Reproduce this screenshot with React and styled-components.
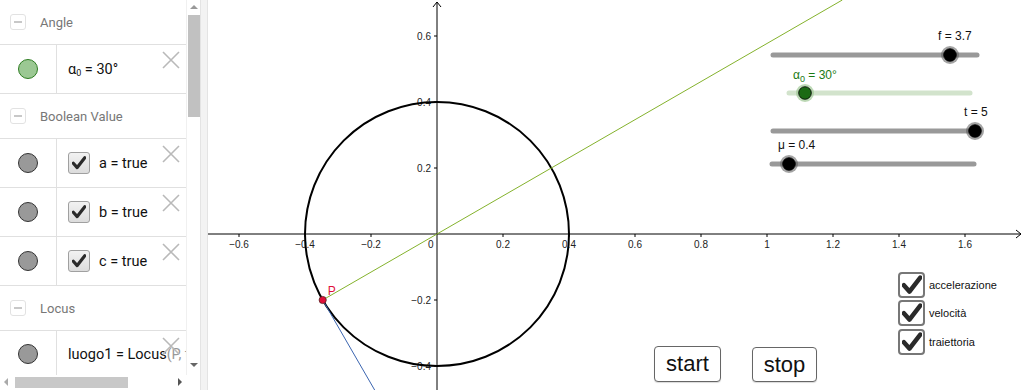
import React from "react";
import styled, { createGlobalStyle } from "styled-components";

const Global = createGlobalStyle`
  html, body { margin: 0; padding: 0; background: #fff; }
  body { width: 1024px; height: 390px; overflow: hidden; font-family: "Liberation Sans", Arial, sans-serif; }
  #root { width: 1024px; height: 390px; }
`;

const Page = styled.div`
  display: flex;
  width: 1024px;
  height: 390px;
  background: #fff;
`;

const Algebra = styled.div`
  width: 200px;
  height: 390px;
  display: grid;
  grid-template-columns: 186px 14px;
  grid-template-rows: 375px 14px 1px;
  background: #fff;
`;

const List = styled.div`
  overflow: hidden;
  display: flex;
  flex-direction: column;
`;

const Header = styled.div`
  height: 44px;
  flex: 0 0 auto;
  display: flex;
  align-items: center;
  gap: 14px;
  padding-left: 10px;
  border-bottom: 1px solid #e0e0e0;
  font-family: Roboto, "Noto Sans", sans-serif;
  font-size: 13px;
  color: #777;
`;

const Minus = styled.span`
  width: 14px;
  height: 14px;
  border: 1px solid #e2e2e2;
  border-radius: 3px;
  display: flex;
  align-items: center;
  justify-content: center;
  &::after {
    content: "";
    width: 8px;
    height: 1.5px;
    background: #c8c8c8;
  }
`;

const Item = styled.div`
  height: ${(p) => p.h || 48}px;
  flex: 0 0 auto;
  display: flex;
  position: relative;
  border-bottom: 1px solid #e0e0e0;
`;

const Marker = styled.div`
  width: 56px;
  flex: 0 0 56px;
  border-right: 1px solid #e0e0e0;
  display: flex;
  align-items: center;
  justify-content: center;
  &::after {
    content: "";
    width: 18px;
    height: 18px;
    border-radius: 50%;
    background: ${(p) => (p.green ? "#9bc893" : "#999")};
    border: 1px solid ${(p) => (p.green ? "#2e7d22" : "#333")};
  }
`;

const Formula = styled.div`
  flex: 1;
  display: flex;
  align-items: center;
  gap: 9px;
  padding-left: 11px;
  white-space: nowrap;
  overflow: hidden;
  font-family: Roboto, "Noto Sans", sans-serif;
  font-size: 14.5px;
  color: #111;
  sub { font-size: 9px; vertical-align: -2px; }
`;

const Fade = styled.span`
  color: #999;
`;

const Close = styled.svg`
  position: absolute;
  right: 6px;
  top: 6px;
  width: 18px;
  height: 18px;
`;

const BoolBox = styled.span`
  width: 20px;
  height: 20px;
  border: 1px solid #a0a0a0;
  border-radius: 3px;
  background: linear-gradient(#f2f2f2, #dcdcdc);
  display: flex;
  align-items: center;
  justify-content: center;
  flex: 0 0 auto;
`;

const VScroll = styled.div`
  background: #fff;
  border-left: 1px solid #f0f0f0;
  display: flex;
  flex-direction: column;
  align-items: center;
`;

const Arrow = styled.span`
  width: 0;
  height: 0;
  border-left: 4px solid transparent;
  border-right: 4px solid transparent;
  ${(p) => (p.down ? "border-top: 4px solid #666;" : "border-bottom: 4px solid #999;")}
  margin: ${(p) => (p.down ? "auto 0 8px" : "5px 0 6px")};
`;

const VThumb = styled.div`
  width: 12px;
  height: 102px;
  background: #c1c1c1;
`;

const HScroll = styled.div`
  display: flex;
  align-items: center;
  padding: 0 4px;
  gap: 4px;
  background: #fff;
`;

const HArrow = styled.span`
  width: 0;
  height: 0;
  border-top: 4px solid transparent;
  border-bottom: 4px solid transparent;
  ${(p) => (p.right ? "border-left: 4px solid #555; margin-left: auto;" : "border-right: 4px solid #aaa;")}
`;

const HThumb = styled.div`
  width: 113px;
  height: 11px;
  margin-left: 3px;
  background: #c8c8c8;
`;

const Corner = styled.div`
  background: #fff;
`;

const Splitter = styled.div`
  width: 7px;
  height: 390px;
  background: #f3f3f3;
  border-left: 1px solid #e4e4e4;
  border-right: 1px solid #e4e4e4;
  box-sizing: border-box;
  flex: 0 0 8px;
`;

const Canvas = styled.div`
  position: relative;
  flex: 1;
  height: 390px;
  overflow: hidden;
`;

const Plot = styled.svg`
  display: block;
  width: 816px;
  height: 390px;
  font-family: "Liberation Sans", Arial, sans-serif;
`;

const Check = styled.label`
  position: absolute;
  left: ${(p) => p.x}px;
  top: ${(p) => p.y}px;
  display: flex;
  align-items: center;
  gap: 4px;
  font-family: "Liberation Sans", Arial, sans-serif;
  font-size: 11px;
  color: #111;
`;

const CheckBox = styled.span`
  width: 23px;
  height: 22px;
  border: 2px solid #777;
  border-radius: 4px;
  background: #fff;
  display: flex;
  align-items: center;
  justify-content: center;
`;

const Button = styled.button`
  position: absolute;
  left: ${(p) => p.x}px;
  top: ${(p) => p.y}px;
  width: ${(p) => p.w}px;
  height: ${(p) => p.h}px;
  padding: 0;
  border: 1px solid #666;
  border-radius: 4px;
  background: #fff;
  font-family: "Liberation Sans", Arial, sans-serif;
  font-size: 22px;
  color: #111;
  box-shadow: 0 1px 1px rgba(0,0,0,0.15);
`;

const XIcon = () => (
  <Close viewBox="0 0 18 18">
    <path d="M1 1 L17 17 M17 1 L1 17" stroke="#b9b9b9" strokeWidth="1.6" />
  </Close>
);

const Tick = ({ size = 14 }) => (
  <svg width={size} height={size} viewBox="0 0 14 14">
    <path d="M1.3 7.2 L5.2 11.6 L12.8 1.8" fill="none" stroke="#2a2a2a" strokeWidth="3.2" strokeLinecap="round" strokeLinejoin="round" />
  </svg>
);

const OX = 229;
const OY = 234;
const S = 330;

const fmt = (v) => {
  const r = Math.round(v * 10) / 10;
  if (r === 0) return "0";
  const s = Math.abs(r).toString();
  return r < 0 ? "\u2212" + s : s;
};

const Slider = ({ x1, x2, y, knob, color = "#999", fill = "#000", halo = "rgba(90,90,90,0.55)" }) => (
  <g>
    <line x1={x1} y1={y} x2={x2} y2={y} stroke={color} strokeWidth="5" strokeLinecap="round" />
    <circle cx={knob} cy={y} r="9" fill={halo} />
    <circle cx={knob} cy={y} r="6.3" fill={fill} stroke="#000" strokeWidth="0.8" />
  </g>
);

const Graph = () => {
  const xt = [];
  for (let i = -3; i <= 8; i++) xt.push(i * 0.2);
  const yt = [0.6, 0.4, 0.2, -0.2, -0.4];
  const px = OX - 0.4 * Math.cos(Math.PI / 6) * S;
  const py = OY + 0.4 * Math.sin(Math.PI / 6) * S;
  const gx = OX + OY / Math.tan(Math.PI / 6);
  const bt = (390 - py) / Math.cos(Math.PI / 6);
  return (
    <Plot viewBox="0 0 816 390">
      <line x1="0" y1={OY} x2="813" y2={OY} stroke="#000" strokeWidth="1" />
      <path d={`M808 ${OY - 4} L813 ${OY} L808 ${OY + 4}`} fill="none" stroke="#000" strokeWidth="1" />
      <line x1={OX} y1="2" x2={OX} y2="390" stroke="#000" strokeWidth="1" />
      <path d={`M${OX - 4} 7 L${OX} 2 L${OX + 4} 7`} fill="none" stroke="#000" strokeWidth="1" />
      {xt.map((v) => {
        const x = OX + v * S;
        if (Math.abs(v) < 1e-9)
          return (
            <text key="o" x={OX - 9} y={OY + 14} fontSize="10" fill="#222">0</text>
          );
        return (
          <g key={v}>
            <line x1={x} y1={OY} x2={x} y2={OY + 3} stroke="#000" />
            <text x={x} y={OY + 14} fontSize="10" fill="#222" textAnchor="middle">{fmt(v)}</text>
          </g>
        );
      })}
      {yt.map((v) => {
        const y = OY - v * S;
        return (
          <g key={v}>
            <line x1={OX - 3} y1={y} x2={OX} y2={y} stroke="#000" />
            <text x={OX - 6} y={y + 3.5} fontSize="10" fill="#222" textAnchor="end">{fmt(v)}</text>
          </g>
        );
      })}
      <circle cx={OX} cy={OY} r={0.4 * S} fill="none" stroke="#000" strokeWidth="2" />
      <line x1={px} y1={py} x2={gx} y2="0" stroke="#84b22c" strokeWidth="1" />
      <line x1={px} y1={py} x2={px + bt * 0.5} y2="390" stroke="#3b65b0" strokeWidth="1" />
      <circle cx={px} cy={py} r="3.6" fill="#e0103a" stroke="#552222" strokeWidth="0.8" />
      <text x={px + 5} y={py - 5} fontSize="12" fill="#e0103a">P</text>

      <Slider x1={565} x2={769} y={55} knob={742} />
      <text x={730} y={40} fontSize="12" fill="#111">f = 3.7</text>

      <Slider x1={581} x2={762} y={93} knob={597} color="#d2e3cc" fill="#1b6a14" halo="rgba(160,200,150,0.7)" />
      <text x={585} y={79} fontSize="12" fill="#1b7a14">
        α<tspan fontSize="9" dy="3">0</tspan><tspan dy="-3"> = 30°</tspan>
      </text>

      <Slider x1={565} x2={767} y={131} knob={767} />
      <text x={756} y={116} fontSize="12" fill="#111">t = 5</text>

      <Slider x1={564} x2={766} y={164} knob={581} />
      <text x={570} y={149} fontSize="12" fill="#111">μ = 0.4</text>
    </Plot>
  );
};

const checks = [
  { y: 272, label: "accelerazione" },
  { y: 300, label: "velocità" },
  { y: 329, label: "traiettoria" },
];

export default function App() {
  return (
    <>
      <Global />
      <Page>
        <Algebra>
          <List>
            <Header><Minus />Angle</Header>
            <Item>
              <Marker green />
              <Formula>
                <span>α<sub>0</sub> = 30°</span>
              </Formula>
              <XIcon />
            </Item>
            <Header><Minus />Boolean Value</Header>
            {["a", "b", "c"].map((n) => (
              <Item key={n}>
                <Marker />
                <Formula>
                  <BoolBox><Tick /></BoolBox>
                  <span>{n} = true</span>
                </Formula>
                <XIcon />
              </Item>
            ))}
            <Header><Minus />Locus</Header>
            <Item h={46}>
              <Marker />
              <Formula>
                <span>luogo1 = Locus<Fade>(P, t)</Fade></span>
              </Formula>
              <XIcon />
            </Item>
          </List>
          <VScroll>
            <Arrow />
            <VThumb />
            <Arrow down />
          </VScroll>
          <HScroll>
            <HArrow />
            <HThumb />
            <HArrow right />
          </HScroll>
          <Corner />
        </Algebra>
        <Splitter />
        <Canvas>
          <Graph />
          {checks.map((c) => (
            <Check key={c.label} x={690} y={c.y}>
              <CheckBox><Tick size={20} /></CheckBox>
              {c.label}
            </Check>
          ))}
          <Button x={446} y={346} w={67} h={36}>start</Button>
          <Button x={544} y={347} w={65} h={35}>stop</Button>
        </Canvas>
      </Page>
    </>
  );
}
